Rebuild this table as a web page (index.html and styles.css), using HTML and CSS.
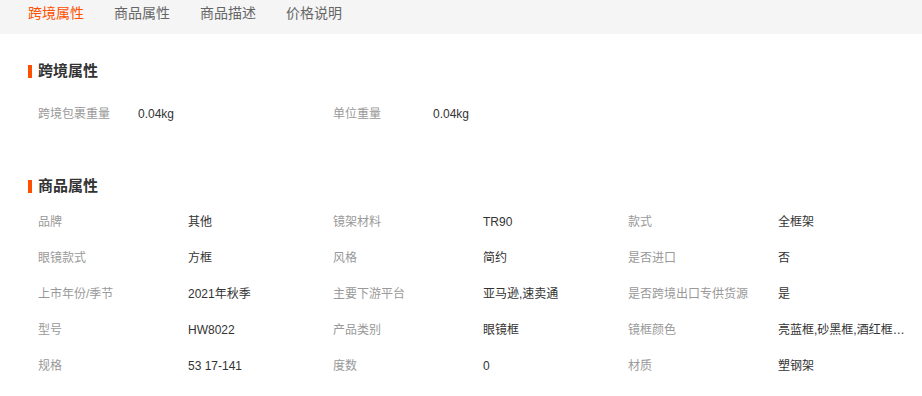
FILE: index.html
```html
<!DOCTYPE html>
<html lang="zh-CN">
<head>
<meta charset="utf-8">
<title>商品详情</title>
<link rel="stylesheet" href="styles.css">
</head>
<body>
<nav class="tabs">
  <span class="tab active">跨境属性</span>
  <span class="tab">商品属性</span>
  <span class="tab">商品描述</span>
  <span class="tab">价格说明</span>
</nav>

<section class="section section-cross">
  <h2 class="title">跨境属性</h2>
  <div class="list list-cross">
    <div class="row row-two">
      <span class="label">跨境包裹重量</span><span class="value">0.04kg</span>
      <span class="label">单位重量</span><span class="value">0.04kg</span>
    </div>
  </div>
</section>

<section class="section section-goods">
  <h2 class="title">商品属性</h2>
  <div class="list list-goods">
    <div class="row row-three">
      <span class="label">品牌</span><span class="value">其他</span>
      <span class="label">镜架材料</span><span class="value">TR90</span>
      <span class="label">款式</span><span class="value">全框架</span>
    </div>
    <div class="row row-three">
      <span class="label">眼镜款式</span><span class="value">方框</span>
      <span class="label">风格</span><span class="value">简约</span>
      <span class="label">是否进口</span><span class="value">否</span>
    </div>
    <div class="row row-three">
      <span class="label">上市年份/季节</span><span class="value">2021年秋季</span>
      <span class="label">主要下游平台</span><span class="value">亚马逊,速卖通</span>
      <span class="label">是否跨境出口专供货源</span><span class="value">是</span>
    </div>
    <div class="row row-three">
      <span class="label">型号</span><span class="value">HW8022</span>
      <span class="label">产品类别</span><span class="value">眼镜框</span>
      <span class="label">镜框颜色</span><span class="value" title="亮蓝框,砂黑框,酒红框,透明框,玳瑁框">亮蓝框,砂黑框,酒红框,透明框,玳瑁框</span>
    </div>
    <div class="row row-three">
      <span class="label">规格</span><span class="value">53 17-141</span>
      <span class="label">度数</span><span class="value">0</span>
      <span class="label">材质</span><span class="value">塑钢架</span>
    </div>
  </div>
</section>
</body>
</html>
```

FILE: styles.css
```css
html, body {
  margin: 0;
  padding: 0;
  background: #ffffff;
}

body {
  font-family: "Liberation Sans", "Noto Sans CJK SC", sans-serif;
  color: #333333;
}

.tabs {
  display: flex;
  gap: 30px;
  height: 34px;
  padding-left: 28px;
  padding-bottom: 8px;
  box-sizing: border-box;
  align-items: center;
  background: #f5f5f5;
}

.tab {
  font-size: 14px;
  line-height: 20px;
  color: #666666;
}

.tab.active {
  color: #ff5000;
}

.section {
  padding-left: 28px;
}

.section-cross {
  padding-top: 27px;
}

.section-goods {
  padding-top: 44px;
}

.title {
  display: flex;
  align-items: center;
  gap: 6px;
  margin: 0;
  font-size: 15px;
  line-height: 20px;
  font-weight: bold;
  color: #333333;
}

.title::before {
  content: "";
  display: block;
  width: 4px;
  height: 13px;
  background: #ff5000;
}

.list {
  padding-left: 10px;
}

.list-cross {
  margin-top: 15px;
}

.list-goods {
  margin-top: 8px;
}

.row {
  display: grid;
  height: 36px;
  line-height: 36px;
  font-size: 12px;
}

.row-two {
  grid-template-columns: 100px 195px 100px 195px;
}

.row-three {
  grid-template-columns: 150px 145px 150px 145px 150px 127px;
}

.label {
  color: #999999;
  white-space: nowrap;
}

.value {
  color: #333333;
  white-space: nowrap;
  overflow: hidden;
  text-overflow: ellipsis;
}
```
